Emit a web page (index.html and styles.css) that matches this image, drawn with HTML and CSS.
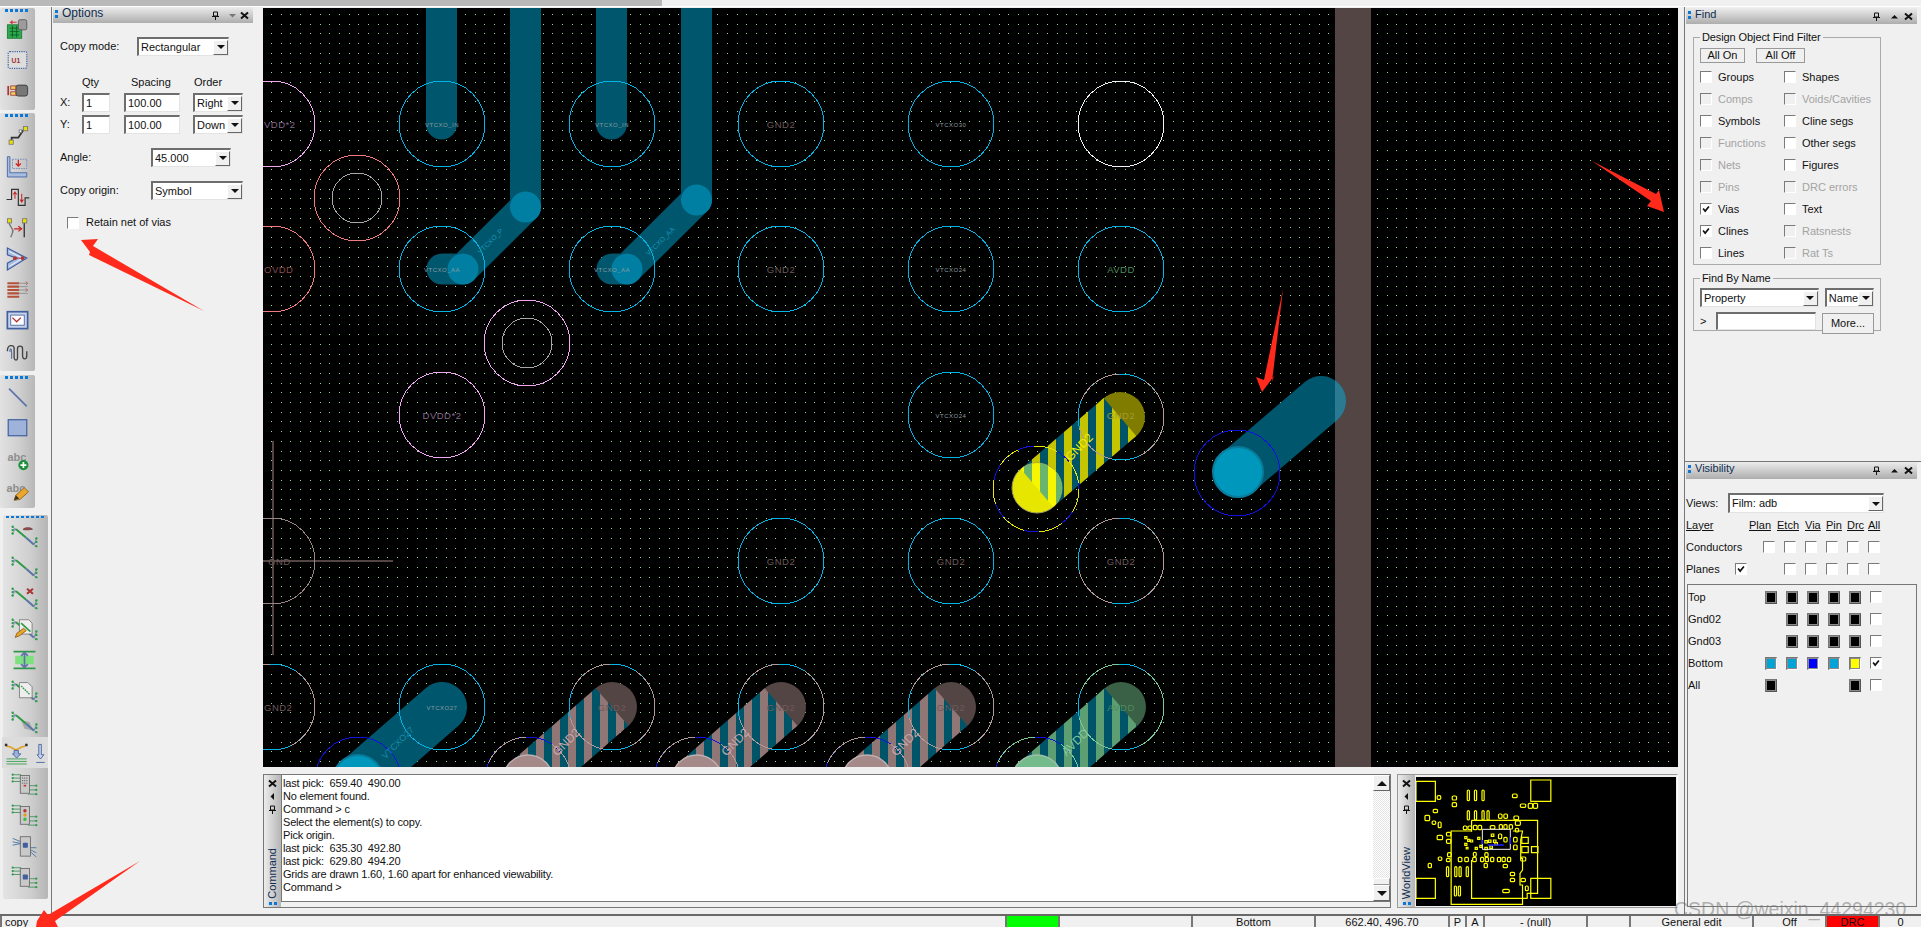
FILE: index.html
```html
<!DOCTYPE html>
<html lang="en">
<head>
<meta charset="utf-8">
<title>Allegro PCB Editor</title>
<link rel="stylesheet" href="styles.css">
</head>
<body>
<svg class="defs" aria-hidden="true">
  <symbol id="x" viewBox="0 0 9 9"><path d="M1 1.5 8 7.5M8 1.5 1 7.5" stroke="#111" stroke-width="2"/></symbol>
  <symbol id="pin" viewBox="0 0 9 9"><path d="M2.5 1h4v4h-4zM1 5.5h7M4.5 5.5V9" stroke="#111" fill="none"/></symbol>
  <symbol id="up" viewBox="0 0 9 9"><path d="M1 6.5 4.5 3 8 6.5z" fill="#111"/></symbol>
  <symbol id="down" viewBox="0 0 9 9"><path d="M1 3 8 3 4.5 6.5z" fill="#777"/></symbol>
  <symbol id="left" viewBox="0 0 9 9"><path d="M6 1v7L2.5 4.5z" fill="#111"/></symbol>
  <symbol id="check" viewBox="0 0 12 12"><path d="M2.5 5.5 5 8.5 9.5 3" fill="none" stroke="#111" stroke-width="2"/></symbol>
  <symbol id="net" viewBox="0 0 32 28">
    <path d="M6 6 18 16" stroke="#2f9a45" stroke-width="2.4" fill="none"/><path d="M18 16 27 24" stroke="#5b74a8" stroke-width="2.4" fill="none"/>
    <path d="M1 3 6 6M1 7 6 6M1 11 6 6M31 16 27 24M31 20 27 24M31 27 27 24" stroke="#5b74a8" stroke-width=".8"/>
    <g fill="#2aa044"><circle cx="2" cy="3" r="1.4"/><circle cx="2" cy="7" r="1.4"/><circle cx="2" cy="11" r="1.4"/><circle cx="30" cy="17" r="1.4"/><circle cx="30" cy="21" r="1.4"/><circle cx="30" cy="26" r="1.4"/></g>
  </symbol>
  <symbol id="chipnet" viewBox="0 0 32 28">
    <g fill="#2aa044"><circle cx="2" cy="3" r="1.3"/><circle cx="2" cy="7" r="1.3"/><circle cx="2" cy="11" r="1.3"/><circle cx="30" cy="16" r="1.3"/><circle cx="30" cy="21" r="1.3"/><circle cx="30" cy="26" r="1.3"/></g>
    <path d="M2 3h10M2 7h10M2 11h10M20 16h10M20 21h10M20 26h10" stroke="#3d8f5a"/>
    <rect x="11" y="4" width="11" height="21" fill="#c9c9c9" stroke="#666"/>
  </symbol>
</svg>

<div class="topstrip"><div class="topbar"></div></div>

<div class="main">
  <div class="toolstrip">
    <div class="tb tb1">
      <div class="grip"></div>
      <div class="slot"><svg class="ic" viewBox="0 0 32 28"><rect x="4" y="9" width="17" height="16" fill="#2fa84f" stroke="#1b7a35"/><path d="M7 13h11M7 17h11M7 21h11M10 10v14M15 10v14" stroke="#0d5c24"/><rect x="17" y="3" width="10" height="12" rx="2" fill="#9c9c9c" stroke="#555"/><path d="M15 6H8l2-2M8 6l2 2" stroke="#c33" fill="none" stroke-width="1.4"/></svg></div>
      <div class="slot"><svg class="ic" viewBox="0 0 32 28"><rect x="5" y="4" width="22" height="20" rx="2" fill="#ddd" stroke="#4668a8" stroke-dasharray="1.5 1.2" stroke-width="1.4"/><text x="9" y="18" class="u1">U1</text></svg></div>
      <div class="slot"><svg class="ic" viewBox="0 0 32 28"><rect x="14" y="7" width="14" height="13" rx="3" fill="#777" stroke="#333"/><rect x="8" y="8" width="6" height="4" fill="#e8d85a" stroke="#a33"/><rect x="8" y="15" width="6" height="4" fill="#e8d85a" stroke="#a33"/><path d="M5 8v11" stroke="#a33" stroke-width="2"/></svg></div>
    </div>
    <div class="tb tb2">
      <div class="grip"></div>
      <div class="slot"><svg class="ic" viewBox="0 0 32 28"><path d="M9 23v-6h8l6-9" fill="none" stroke="#333" stroke-width="2"/><rect x="6" y="20" width="5" height="5" fill="#e8e000" stroke="#777"/><rect x="23" y="4" width="5" height="5" fill="#e8e000" stroke="#777"/><rect x="18" y="8" width="3" height="3" fill="#fff" stroke="#777"/></svg></div>
      <div class="slot"><svg class="ic" viewBox="0 0 32 28"><path d="M7 3v19h20v5H4V3z" fill="#a9bde0" stroke="#3f5f9f"/><rect x="10" y="6" width="17" height="11" fill="none" stroke="#6f86b8" stroke-dasharray="2 1"/><path d="M17 7v7M14 11l3 3 3-3" fill="none" stroke="#c22" stroke-width="1.5"/></svg></div>
      <div class="slot"><svg class="ic" viewBox="0 0 32 28"><path d="M3 17h6V5h8v19h8v-9h5" fill="none" stroke="#333" stroke-width="1.4"/><path d="M13 16V8M11 11l2-3 2 3M21 10v10M19 17l2 3 2-3" fill="none" stroke="#c22" stroke-width="1.2"/></svg></div>
      <div class="slot"><svg class="ic" viewBox="0 0 32 28"><path d="M6 7c0 7 7 7 4 13l-2 5" fill="none" stroke="#777" stroke-width="1.6"/><path d="M24 6v19" stroke="#333" stroke-width="1.6"/><rect x="4" y="3" width="5" height="5" fill="#e8e000" stroke="#777"/><rect x="22" y="3" width="5" height="5" fill="#e8e000" stroke="#777"/><path d="M12 15h8M17 12l4 3-4 3" fill="none" stroke="#c22" stroke-width="1.4"/></svg></div>
      <div class="slot"><svg class="ic" viewBox="0 0 32 28"><path d="M4 1 27 13 4 27v-8l11-6L4 9z" fill="#a9bde0" stroke="#3f5f9f" stroke-width="1.4"/><path d="M6 5 22 13 6 23" fill="none" stroke="#fff"/><circle cx="13" cy="13" r="2.200" fill="#b53333"/><circle cx="22" cy="13" r="2.200" fill="#b53333"/><path d="M13 13h9" stroke="#b53333"/></svg></div>
      <div class="slot"><svg class="ic" viewBox="0 0 32 28"><g fill="none" stroke="#b5523a" stroke-width="2.4"><path d="M4 6h14M4 10h14M4 14h14M4 18h14M4 22h14"/></g><path d="M18 6h10M18 10h10M18 14h10M18 18h10" stroke="#888"/><path d="M26 4l2 2-2 2M26 12l2 2-2 2" fill="none" stroke="#b5523a"/></svg></div>
      <div class="slot"><svg class="ic" viewBox="0 0 32 28"><rect x="4" y="3" width="24" height="20" fill="#c7d2e8" stroke="#3f5f9f" stroke-width="2"/><rect x="8" y="7" width="16" height="12" fill="#fff" stroke="#3f5f9f"/><path d="M10 10l5 5 5-5" fill="none" stroke="#b53333" stroke-width="1.6"/></svg></div>
      <div class="slot"><svg class="ic" viewBox="0 0 32 28"><path d="M4 13c0-8 7-8 8-4v12c1 4 4 3 4 0V10c0-4 6-4 6 0v8c0 6 5 5 5 0v-5" fill="none" stroke="#444" stroke-width="1.6"/><path d="M7 14c0-6 2-4 2 0v8" fill="none" stroke="#5b74a8" stroke-width="1.4"/></svg></div>
    </div>
    <div class="tb tb3">
      <div class="grip"></div>
      <div class="slot"><svg class="ic" viewBox="0 0 32 28"><path d="M6 3 27 24" stroke="#5b74a8" stroke-width="2"/></svg></div>
      <div class="slot"><svg class="ic" viewBox="0 0 32 28"><rect x="5" y="3" width="22" height="19" fill="#9fb2da" stroke="#3f5f9f" stroke-width="1.4"/></svg></div>
      <div class="slot"><svg class="ic" viewBox="0 0 32 28"><text x="4" y="15" class="abc">abc</text><circle cx="23" cy="20" r="6" fill="#1f8f3b"/><path d="M19.5 20h7M23 16.500v7" stroke="#fff" stroke-width="2"/></svg></div>
      <div class="slot"><svg class="ic" viewBox="0 0 32 28"><text x="3" y="15" class="abc">abc</text><path d="M12 25l2-6 10-9 5 5-10 9z" fill="#e9a82c" stroke="#8a5a14"/><path d="M12 25l2-6 4 4z" fill="#333"/></svg></div>
    </div>
    <div class="tb tb4">
      <div class="grip"></div>
      <div class="slot"><svg class="ic" viewBox="0 0 32 28"><use href="#net"/><path d="M14 6c2-3 10-3 12 0 2 1-14 2-12 0z" fill="#8a4a4a"/></svg></div>
      <div class="slot"><svg class="ic" viewBox="0 0 32 28"><use href="#net"/></svg></div>
      <div class="slot"><svg class="ic" viewBox="0 0 32 28"><use href="#net"/><path d="M19 3l7 6M26 3l-7 6" stroke="#a33" stroke-width="2.4"/></svg></div>
      <div class="slot"><svg class="ic" viewBox="0 0 32 28"><use href="#net"/><path d="M10 3h11l4 4v13H10z" fill="#eee" stroke="#777"/><path d="M12 7l11 10" stroke="#2f9a45" stroke-width="2"/><path d="M5 24l2-5 8-6 3 3-8 6z" fill="#e9a82c" stroke="#8a5a14"/></svg></div>
      <div class="slot"><svg class="ic" viewBox="0 0 32 28"><path d="M3 4h26M3 24h26" stroke="#2f9a45" stroke-width="2"/><rect x="5" y="9" width="22" height="10" fill="#7fe07f"/><path d="M16 5v18M12 9l4-4 4 4M12 19l4 4 4-4" fill="none" stroke="#5b74a8" stroke-width="2"/></svg></div>
      <div class="slot"><svg class="ic" viewBox="0 0 32 28"><use href="#net"/><path d="M10 4h10l5 5v13H10z" fill="#eee" stroke="#777"/><path d="M12 8l10 10" stroke="#2f9a45" stroke-dasharray="2 1" stroke-width="1.600"/></svg></div>
      <div class="slot"><svg class="ic" viewBox="0 0 32 28"><path d="M12 12l10 2 4 10-10-2z" fill="#aaa"/><use href="#net"/></svg></div>
      <div class="slot slot-hi"><svg class="ic" viewBox="0 0 32 28"><path d="M3 6c8 0 6 4 11 4s4-4 11-4" fill="none" stroke="#e0a020" stroke-width="2"/><path d="M3 21h24M3 24h24M3 27h24" stroke="#2f9a45"/><path d="M12 11h5v4h3l-5 5-5-5h2z" fill="#9fb2da" stroke="#3f5f9f"/><rect x="1" y="3" width="3" height="3" fill="#333"/><rect x="25" y="3" width="3" height="3" fill="#333"/></svg><svg class="ic-sm" viewBox="0 0 12 28"><path d="M4 4h3v12h3l-4 5-4-5h2zM1 25h10" fill="#c7d2e8" stroke="#3f5f9f"/></svg></div>
      <div class="slot"><svg class="ic" viewBox="0 0 32 28"><use href="#chipnet"/><path d="M13 7h7M13 10h7M13 13h7" stroke="#555" stroke-dasharray="1.500 1"/><rect x="15" y="15" width="3" height="2" fill="#c33"/></svg></div>
      <div class="slot"><svg class="ic" viewBox="0 0 32 28"><use href="#chipnet"/><circle cx="16.500" cy="9" r="2" fill="#b53333"/><circle cx="16.500" cy="14" r="2" fill="#e0a020"/><circle cx="16.500" cy="19" r="2" fill="#3dbb3d"/></svg></div>
      <div class="slot"><svg class="ic" viewBox="0 0 32 28"><path d="M2 5l10 4M2 9l10 2M2 13l10-2M22 16l8 0M22 18l8 4M22 20l8 7" stroke="#3d6fa0"/><rect x="11" y="3" width="12" height="23" fill="#c9c9c9" stroke="#666"/><rect x="14" y="10" width="6" height="6" rx="1" fill="#3f5f9f"/></svg></div>
      <div class="slot"><svg class="ic" viewBox="0 0 32 28"><use href="#chipnet"/><rect x="14" y="11" width="6" height="6" rx="1" fill="#3f5f9f"/></svg></div>
    </div>
  </div>

  <section class="options">
    <header class="titlebar"><span class="dots"></span><span class="tt">Options</span><svg class="tg"><use href="#pin"/></svg><svg class="tg"><use href="#down"/></svg><svg class="tg"><use href="#x"/></svg></header>
    <div class="opt-body">
      <div class="row row-mode"><span class="lbl-77">Copy mode:</span><div class="sel w92"><span class="val">Rectangular</span><i class="drop"></i></div></div>
      <div class="qgrid">
        <span></span><span>Qty</span><span class="ind7">Spacing</span><span class="ind1">Order</span>
        <span class="axis">X:</span><div class="inp w28">1</div><div class="inp w56">100.00</div><div class="sel w50"><span class="val">Right</span><i class="drop"></i></div>
        <span class="axis">Y:</span><div class="inp w28">1</div><div class="inp w56">100.00</div><div class="sel w50"><span class="val">Down</span><i class="drop"></i></div>
      </div>
      <div class="row row-14"><span class="lbl-91">Angle:</span><div class="sel w80"><span class="val">45.000</span><i class="drop"></i></div></div>
      <div class="row row-14"><span class="lbl-91">Copy origin:</span><div class="sel w92"><span class="val">Symbol</span><i class="drop"></i></div></div>
      <label class="retain"><i class="cb"></i>Retain net of vias</label>
    </div>
  </section>

  <div class="center">
    <svg class="board" viewBox="263 8 1415 759" xmlns="http://www.w3.org/2000/svg">
      <defs>
        <pattern id="grid" width="97" height="97" patternUnits="userSpaceOnUse" x="271" y="14">
          <g class="gridrows">
            <path d="M0 .5H97"/><path d="M0 10.500H97"/><path d="M0 19.500H97"/><path d="M0 29.500H97"/><path d="M0 39.500H97"/><path d="M0 49.500H97"/><path d="M0 58.500H97"/><path d="M0 68.500H97"/><path d="M0 78.500H97"/><path d="M0 87.500H97"/>
          </g>
        </pattern>
        <pattern id="stripeY" width="16" height="16" patternUnits="userSpaceOnUse" x="1088"><rect width="16" height="16" fill="#c4c400"/><rect width="8" height="16" fill="#005468"/></pattern>
        <pattern id="stripeP" width="16" height="16" patternUnits="userSpaceOnUse" x="1088"><rect width="16" height="16" fill="#917676"/><rect width="8" height="16" fill="#005468"/></pattern>
        <pattern id="stripeG" width="16" height="16" patternUnits="userSpaceOnUse" x="1088"><rect width="16" height="16" fill="#5d9e73"/><rect width="8" height="16" fill="#005468"/></pattern>
        <pattern id="stripeV" width="16" height="16" patternUnits="userSpaceOnUse" x="1088"><rect width="16" height="16" fill="#f6f600"/><rect width="8" height="16" fill="#6ab56d"/></pattern>
        <clipPath id="bandclip"><rect x="1335" y="8" width="36" height="759"/></clipPath>
        <clipPath id="viaY"><circle cx="1037" cy="488" r="25"/></clipPath>
      </defs>
      <rect class="bg" x="263" y="8" width="1415" height="759"/>
      <rect x="263" y="8" width="1415" height="759" fill="url(#grid)"/>
      <rect class="band" x="1335" y="8" width="36" height="759"/>
      <path class="xhair" d="M272.500 441V655M263 561H393"/>

      <path class="tr" d="M441.500 0V124"/>
      <path class="tr" d="M525.500 0V207L463 269H442"/>
      <path class="tr" d="M611.500 0V124"/>
      <path class="tr" d="M696.500 0V200L627 269H612"/>
      <circle class="hot" cx="525.500" cy="207" r="15.500"/><circle class="hot" cx="463" cy="269" r="15.500"/>
      <circle class="hot" cx="696.500" cy="200" r="15.500"/><circle class="hot" cx="627" cy="269" r="15.500"/>

      <path class="tr tr-w" d="M1238 472 1321 401"/>
      <path class="tr tr-wb" clip-path="url(#bandclip)" d="M1238 472 1321 401"/>
      <circle class="via-c" cx="1238" cy="472" r="25"/>

      <circle class="cap-y" cx="1120" cy="417" r="25"/>
      <path class="s-y" d="M1037 488 1120 417"/>
      <circle class="via-y" cx="1037" cy="488" r="25"/>
      <path class="s-v" clip-path="url(#viaY)" d="M1037 488 1120 417"/>

      <path class="tr tr-w" d="M358 780 442 707"/>
      <circle class="via-c" cx="358" cy="780" r="25"/>
      <circle class="cap-p" cx="612" cy="707" r="25"/><path class="s-p" d="M528 780 612 707"/><circle class="via-p" cx="528" cy="780" r="25"/>
      <circle class="cap-p" cx="781" cy="707" r="25"/><path class="s-p" d="M697 780 781 707"/><circle class="via-p" cx="697" cy="780" r="25"/>
      <circle class="cap-p" cx="951" cy="707" r="25"/><path class="s-p" d="M867 780 951 707"/><circle class="via-p" cx="867" cy="780" r="25"/>
      <circle class="cap-g" cx="1121" cy="707" r="25"/><path class="s-g" d="M1037 780 1121 707"/><circle class="via-g" cx="1037" cy="780" r="25"/>

      <circle class="pad pink" cx="272" cy="124" r="43"/>
      <circle class="pad cy" cx="442" cy="124" r="43"/><circle class="pad cy" cx="612" cy="124" r="43"/>
      <circle class="pad cy" cx="781" cy="124" r="43"/><circle class="pad cy" cx="951" cy="124" r="43"/>
      <circle class="pad wh" cx="1121" cy="124" r="43"/>
      <circle class="pad sal" cx="272" cy="269" r="43"/>
      <circle class="pad cy" cx="442" cy="269" r="43"/><circle class="pad cy" cx="612" cy="269" r="43"/>
      <circle class="pad cy" cx="781" cy="269" r="43"/><circle class="pad cy" cx="951" cy="269" r="43"/>
      <circle class="pad cy" cx="1121" cy="269" r="43"/>
      <circle class="pad pink" cx="442" cy="415" r="43"/><circle class="pad cy" cx="951" cy="415" r="43"/>
      <circle class="pad cy" cx="1121" cy="417" r="43"/><circle class="pad br-d" cx="1121" cy="417" r="43"/>
      <circle class="pad br" cx="272" cy="561" r="43"/>
      <circle class="pad cy" cx="781" cy="561" r="43"/><circle class="pad cy" cx="951" cy="561" r="43"/>
      <circle class="pad cy" cx="1121" cy="561" r="43"/><circle class="pad br-d" cx="1121" cy="561" r="43"/>
      <circle class="pad cy" cx="272" cy="707" r="43"/><circle class="pad br-d" cx="272" cy="707" r="43"/>
      <circle class="pad cy" cx="442" cy="707" r="43"/>
      <circle class="pad cy" cx="612" cy="707" r="43"/><circle class="pad br-d" cx="612" cy="707" r="43"/>
      <circle class="pad cy" cx="781" cy="707" r="43"/><circle class="pad br-d" cx="781" cy="707" r="43"/>
      <circle class="pad cy" cx="951" cy="707" r="43"/><circle class="pad br-d" cx="951" cy="707" r="43"/>
      <circle class="pad cy" cx="1121" cy="707" r="43"/><circle class="pad gr-d" cx="1121" cy="707" r="43"/>

      <circle class="pad sal" cx="357" cy="198" r="43"/><circle class="pad gy" cx="357" cy="198" r="25"/>
      <circle class="pad pink" cx="527" cy="343" r="43"/><circle class="pad gy" cx="527" cy="343" r="25"/>
      <circle class="pad bl" cx="1237" cy="473" r="43"/>
      <circle class="pad bl" cx="1036" cy="489" r="43"/><circle class="pad ye-d" cx="1036" cy="489" r="43"/>
      <circle class="pad bl" cx="358" cy="780" r="43"/>
      <circle class="pad bl" cx="528" cy="780" r="43"/><circle class="pad br-d" cx="528" cy="780" r="43"/>
      <circle class="pad bl" cx="697" cy="780" r="43"/><circle class="pad br-d" cx="697" cy="780" r="43"/>
      <circle class="pad bl" cx="867" cy="780" r="43"/><circle class="pad br-d" cx="867" cy="780" r="43"/>
      <circle class="pad bl" cx="1037" cy="780" r="43"/><circle class="pad gr-d" cx="1037" cy="780" r="43"/>

      <text class="lb l-pk" x="264" y="128">VDD*2</text>
      <text class="lb l-sm" x="442" y="127">VTCXO_IN</text><text class="lb l-sm" x="612" y="127">VTCXO_IN</text>
      <text class="lb l-b" x="781" y="128">GND2</text><text class="lb l-sm" x="951" y="127">VTCXO30</text>
      <text class="lb l-sa" x="264" y="273">OVDD</text>
      <text class="lb l-sm" x="442" y="272">VTCXO_AA</text><text class="lb l-sm" x="612" y="272">VTCXO_AA</text>
      <text class="lb l-b" x="781" y="273">GND2</text><text class="lb l-sm" x="951" y="272">VTCXO24</text>
      <text class="lb l-g" x="1121" y="273">AVDD</text>
      <text class="lb l-pk l-mid" x="442" y="419">DVDD*2</text><text class="lb l-sm" x="951" y="418">VTCXO24</text>
      <text class="lb l-y" x="1121" y="419">GND2</text>
      <text class="lb l-b l-st" x="268" y="565">GND</text>
      <text class="lb l-b" x="781" y="565">GND2</text><text class="lb l-b" x="951" y="565">GND2</text><text class="lb l-b" x="1121" y="565">GND2</text>
      <text class="lb l-b l-st" x="264" y="711">GND2</text><text class="lb l-sm" x="442" y="710">VTCXO27</text>
      <text class="lb l-b" x="612" y="711">GND2</text><text class="lb l-b" x="781" y="711">GND2</text><text class="lb l-b" x="951" y="711">GND2</text>
      <text class="lb l-g" x="1121" y="711">AVDD</text>
      <text class="nm n-c-s" transform="translate(492 243) rotate(-45)">VTCXO_P</text>
      <text class="nm n-c-s" transform="translate(662 243) rotate(-45)">VTCXO_AA</text>
      <text class="nm n-y" transform="translate(1082 450) rotate(-45)">GND2</text>
      <text class="nm n-c" transform="translate(400 745) rotate(-45)">VTCXO27</text>
      <text class="nm n-p" transform="translate(569 745) rotate(-45)">GND2</text>
      <text class="nm n-p" transform="translate(738 745) rotate(-45)">GND2</text>
      <text class="nm n-p" transform="translate(908 745) rotate(-45)">GND2</text>
      <text class="nm n-g" transform="translate(1078 745) rotate(-45)">AVDD</text>
    </svg>

    <div class="lower">
      <section class="command">
        <aside class="vtitle"><svg class="tg"><use href="#x"/></svg><svg class="tg"><use href="#left"/></svg><svg class="tg"><use href="#pin"/></svg><span class="vname">Command</span><span class="vdots"></span></aside>
        <div class="console">
          <div class="log">
            <div>last pick:&nbsp; 659.40&nbsp; 490.00</div>
            <div>No element found.</div>
            <div>Command &gt; c</div>
            <div>Select the element(s) to copy.</div>
            <div>Pick origin.</div>
            <div>last pick:&nbsp; 635.30&nbsp; 492.80</div>
            <div>last pick:&nbsp; 629.80&nbsp; 494.20</div>
            <div>Grids are drawn 1.60, 1.60 apart for enhanced viewability.</div>
            <div>Command &gt;</div>
          </div>
          <div class="scroll">
            <div class="sbtn"><i class="tri-up"></i></div>
            <div class="strack"></div>
            <div class="sthumb"></div>
            <div class="sbtn"><i class="tri-dn"></i></div>
          </div>
        </div>
      </section>
      <section class="world">
        <aside class="vtitle vt-world"><svg class="tg"><use href="#x"/></svg><svg class="tg"><use href="#left"/></svg><svg class="tg"><use href="#pin"/></svg><span class="vname vn-w">WorldView</span><span class="vdots"></span></aside>
        <svg class="map" viewBox="160 51 725 387" preserveAspectRatio="none">
          <g class="ye">
            <rect x="160" y="64" width="54" height="60"/><rect x="480" y="60" width="56" height="64"/><rect x="160" y="355" width="54" height="60"/><rect x="480" y="355" width="56" height="60"/>
            <path d="M315 181H499V400H470V415H315V300M315 181V215"/>
            <path d="M315 213H258V433H457V375H450V340L457 330V295H452V240L457 213H430"/>
            <g class="ys">
              <rect x="219" y="107" width="10" height="11" rx="3"/><rect x="261" y="108" width="12" height="12" rx="3"/><rect x="261" y="128" width="12" height="12" rx="3"/><rect x="303" y="90" width="6" height="32" rx="3"/><rect x="323" y="90" width="6" height="32" rx="3"/><rect x="344" y="90" width="6" height="32" rx="3"/><rect x="429" y="102" width="13" height="11" rx="3"/><rect x="451" y="132" width="15" height="10" rx="3"/><rect x="473" y="130" width="12" height="15" rx="3"/><rect x="487" y="130" width="12" height="15" rx="3"/><rect x="208" y="148" width="12" height="10" rx="3"/><rect x="185" y="166" width="13" height="16" rx="3"/><rect x="205" y="183" width="10" height="10" rx="3"/><rect x="222" y="186" width="8" height="17" rx="3"/><rect x="303" y="152" width="6" height="28" rx="3"/><rect x="323" y="152" width="6" height="28" rx="3"/><rect x="344" y="152" width="6" height="28" rx="3"/><rect x="358" y="152" width="6" height="28" rx="3"/><rect x="390" y="162" width="10" height="13" rx="3"/><rect x="405" y="162" width="10" height="13" rx="3"/><rect x="433" y="168" width="13" height="11" rx="3"/><rect x="437" y="183" width="14" height="13" rx="3"/><rect x="292" y="198" width="10" height="11" rx="3"/><rect x="305" y="198" width="10" height="11" rx="3"/><rect x="320" y="196" width="10" height="13" rx="3"/><rect x="333" y="196" width="10" height="13" rx="3"/><rect x="367" y="197" width="13" height="10" rx="3"/><rect x="392" y="194" width="9" height="13" rx="3"/><rect x="405" y="194" width="9" height="13" rx="3"/><rect x="420" y="194" width="9" height="13" rx="3"/><rect x="437" y="205" width="9" height="11" rx="3"/><rect x="245" y="217" width="12" height="11" rx="3"/><rect x="219" y="226" width="15" height="13" rx="3"/><rect x="245" y="238" width="12" height="12" rx="3"/><rect x="455" y="232" width="18" height="18"/><rect x="455" y="260" width="18" height="18"/><rect x="482" y="260" width="18" height="18"/><rect x="432" y="232" width="10" height="14" rx="3"/><rect x="432" y="255" width="10" height="14" rx="3"/><rect x="405" y="232" width="9" height="14" rx="3"/><rect x="390" y="222" width="9" height="14" rx="3"/><rect x="248" y="278" width="10" height="12" rx="3"/><rect x="222" y="291" width="10" height="10" rx="3"/><rect x="245" y="295" width="10" height="10" rx="3"/><rect x="278" y="292" width="10" height="13" rx="3"/><rect x="296" y="292" width="10" height="13" rx="3"/><rect x="320" y="277" width="8" height="12" rx="3"/><rect x="318" y="292" width="10" height="13" rx="3"/><rect x="340" y="292" width="9" height="13" rx="3"/><rect x="353" y="292" width="9" height="13" rx="3"/><rect x="368" y="292" width="9" height="13" rx="3"/><rect x="387" y="292" width="9" height="13" rx="3"/><rect x="400" y="292" width="9" height="13" rx="3"/><rect x="415" y="292" width="9" height="13" rx="3"/><rect x="452" y="291" width="14" height="12" rx="3"/><rect x="194" y="310" width="9" height="13" rx="3"/><rect x="350" y="310" width="9" height="13" rx="3"/><rect x="403" y="313" width="12" height="10" rx="3"/><rect x="245" y="320" width="6" height="30" rx="3"/><rect x="268" y="320" width="6" height="30" rx="3"/><rect x="280" y="320" width="6" height="30" rx="3"/><rect x="300" y="320" width="6" height="30" rx="3"/><rect x="423" y="337" width="12" height="10" rx="3"/><rect x="423" y="355" width="12" height="10" rx="3"/><rect x="453" y="355" width="12" height="10" rx="3"/><rect x="465" y="378" width="8" height="14" rx="3"/><rect x="402" y="388" width="18" height="10" rx="3"/><rect x="267" y="378" width="6" height="30" rx="3"/><rect x="278" y="378" width="6" height="30" rx="3"/>
              <rect x="296" y="230" width="6" height="6"/><rect x="304" y="238" width="6" height="6"/><rect x="296" y="250" width="6" height="6"/><rect x="312" y="240" width="6" height="6"/><rect x="332" y="232" width="6" height="6"/><rect x="352" y="242" width="7" height="7"/><rect x="362" y="240" width="7" height="7"/><rect x="376" y="240" width="7" height="7"/><rect x="352" y="262" width="7" height="7"/><rect x="366" y="258" width="7" height="7"/><rect x="380" y="248" width="7" height="7"/><rect x="370" y="222" width="7" height="7"/><rect x="325" y="262" width="6" height="6"/><rect x="338" y="256" width="6" height="6"/><rect x="300" y="262" width="5" height="5"/>
              <rect x="352" y="278" width="9" height="12" rx="3"/>
            </g>
          </g>
          <path class="viewbox" d="M345 248V208H423V268H345V248"/>
          <path class="viewbl" d="M345 240V252M360 255H405M423 232V252"/>
        </svg>
      </section>
    </div>
  </div>

  <div class="side">
    <section class="find">
      <header class="titlebar tb-side"><span class="dots"></span><span class="tt tt-s">Find</span><svg class="tg"><use href="#pin"/></svg><svg class="tg"><use href="#up"/></svg><svg class="tg"><use href="#x"/></svg></header>
      <div class="find-body">
        <fieldset class="fs fs-filter">
          <legend>Design Object Find Filter</legend>
          <div class="btnrow"><button class="btn b45">All On</button><button class="btn b49">All Off</button></div>
          <div class="filters">
            <label class="f"><i class="cb"></i>Groups</label><label class="f"><i class="cb"></i>Shapes</label>
            <label class="f off"><i class="cb"></i>Comps</label><label class="f off"><i class="cb"></i>Voids/Cavities</label>
            <label class="f"><i class="cb"></i>Symbols</label><label class="f"><i class="cb"></i>Cline segs</label>
            <label class="f off"><i class="cb"></i>Functions</label><label class="f"><i class="cb"></i>Other segs</label>
            <label class="f off"><i class="cb"></i>Nets</label><label class="f"><i class="cb"></i>Figures</label>
            <label class="f off"><i class="cb"></i>Pins</label><label class="f off"><i class="cb"></i>DRC errors</label>
            <label class="f"><i class="cb"><svg class="chk"><use href="#check"/></svg></i>Vias</label><label class="f"><i class="cb"></i>Text</label>
            <label class="f"><i class="cb"><svg class="chk"><use href="#check"/></svg></i>Clines</label><label class="f off"><i class="cb"></i>Ratsnests</label>
            <label class="f"><i class="cb"></i>Lines</label><label class="f off"><i class="cb"></i>Rat Ts</label>
          </div>
        </fieldset>
        <fieldset class="fs fs-name">
          <legend>Find By Name</legend>
          <div class="fn-row"><div class="sel w121"><span class="val">Property</span><i class="drop"></i></div><div class="sel w50 ml6"><span class="val">Name</span><i class="drop"></i></div></div>
          <div class="fn-row fn-2"><span class="gt">&gt;</span><div class="inp w104"></div><button class="btn bmore">More...</button></div>
        </fieldset>
      </div>
    </section>
    <section class="visibility">
      <header class="titlebar tb-side tb-vis"><span class="dots"></span><span class="tt tt-v">Visibility</span><svg class="tg"><use href="#pin"/></svg><svg class="tg"><use href="#up"/></svg><svg class="tg"><use href="#x"/></svg></header>
      <div class="views"><span class="lbl-42">Views:</span><div class="sel w156"><span class="val">Film: adb</span><i class="drop"></i></div></div>
      <div class="vis-head"><u>Layer</u><u>Plan</u><u>Etch</u><u>Via</u><u>Pin</u><u>Drc</u><u>All</u></div>
      <div class="vis-grid">
        <span class="span2">Conductors</span><i class="cb"></i><i class="cb"></i><i class="cb"></i><i class="cb"></i><i class="cb"></i><i class="cb"></i>
        <span>Planes</span><i class="cb"><svg class="chk"><use href="#check"/></svg></i><span></span><i class="cb"></i><i class="cb"></i><i class="cb"></i><i class="cb"></i><i class="cb"></i>
      </div>
      <div class="layers">
        <span>Top</span><b class="sw k"></b><b class="sw k"></b><b class="sw k"></b><b class="sw k"></b><b class="sw k"></b><i class="cb"></i>
        <span>Gnd02</span><b class="nosw"></b><b class="sw k"></b><b class="sw k"></b><b class="sw k"></b><b class="sw k"></b><i class="cb"></i>
        <span>Gnd03</span><b class="nosw"></b><b class="sw k"></b><b class="sw k"></b><b class="sw k"></b><b class="sw k"></b><i class="cb"></i>
        <span>Bottom</span><b class="sw c"></b><b class="sw c"></b><b class="sw bb"></b><b class="sw c"></b><b class="sw y"></b><i class="cb"><svg class="chk"><use href="#check"/></svg></i>
        <span>All</span><b class="sw k"></b><b class="nosw"></b><b class="nosw"></b><b class="nosw"></b><b class="sw k"></b><i class="cb"></i>
      </div>
    </section>
  </div>
</div>

<footer class="status">
  <div class="cell c-copy">copy</div>
  <div class="cell c-green"></div>
  <div class="cell c-blank"></div>
  <div class="cell c-bot">Bottom</div>
  <div class="cell c-xy">662.40, 496.70</div>
  <div class="cell c-p">P</div>
  <div class="cell c-a">A</div>
  <div class="cell c-null">- (null)</div>
  <div class="cell c-e"></div>
  <div class="cell c-gen">General edit</div>
  <div class="cell c-off">Off</div>
  <div class="cell c-drc">DRC</div>
  <div class="cell c-0">0</div>
</footer>

<svg class="arrows" viewBox="0 0 1921 927" aria-hidden="true">
  <path d="M81 240 98 239 93 246 204 311 89 255 90 252z"/>
  <path d="M1664 212 1647 206 1651 201 1592 161 1656 194 1659 190z"/>
  <path d="M1262 392 1256 377 1264 380 1283 289 1272 382 1274 376z"/>
  <path d="M37 921 44 910 48 915 140 861 55 921 58 927 36 927z"/>
</svg>
<div class="mark">CSDN @weixin_44294230</div>
</body>
</html>
```
FILE: styles.css
```css
* { box-sizing: border-box; }
html, body { margin: 0; padding: 0; }
body {
  width: 1921px; height: 927px; overflow: hidden; position: relative;
  display: flex; flex-direction: column;
  background: #f0f0f0; color: #111;
  font: 11px/13px "Liberation Sans", Arial, sans-serif;
}
.defs { position: absolute; width: 0; height: 0; overflow: hidden; }

.topstrip { height: 7px; flex: none; border-bottom: 1px solid #fff; }
.topbar { width: 662px; height: 6px; background: #b9b9b9; }

.main { flex: none; height: 907px; display: flex; align-items: flex-start; }

/* left toolbars */
.toolstrip { width: 52px; height: 907px; flex: none; border-right: 1px solid #777; display: flex; flex-direction: column; align-items: flex-start; }
.tb { width: 35px; background: linear-gradient(90deg, #e2e2e2, #cfcfcf 55%, #b7b7b7); border-radius: 2px; display: flex; flex-direction: column; }
.tb1 { margin-top: 1px; height: 102px; }
.tb2 { margin-top: 3px; height: 258px; }
.tb3 { margin-top: 4px; height: 133px; }
.tb4 { margin: 7px 0 0 3px; width: 45px; height: 384px; background: linear-gradient(90deg, #e4e4e4, #cfcfcf 60%, #b5b5b5); }
.grip { height: 4px; flex: none; margin: 1px 5px 0; background: repeating-linear-gradient(90deg, #0a78d8 0 3px, transparent 3px 5px); background-size: 100% 3px; background-repeat: no-repeat; }
.tb2 .grip { height: 5px; }
.tb3 .grip { height: 6px; margin-top: 1px; }
.tb4 .grip { margin: 1px 3px 0; height: 2px; }
.slot { height: 31px; flex: none; display: flex; align-items: center; justify-content: center; }
.ic { width: 27px; height: 24px; flex: none; }
.ic-sm { width: 11px; height: 24px; flex: none; }
.tb4 .slot { padding-right: 3px; }
.tb4 .grip + .slot { margin-top: 2px; }
.slot-hi { background: #dcdcdc; margin-left: -1px; gap: 4px; padding: 0 !important; }
.u1 { font: bold 8px "Liberation Sans", sans-serif; fill: #a03030; }
.abc { font: bold 13px "Liberation Sans", sans-serif; fill: #8e8e8e; }

/* title bars */
.titlebar { height: 16px; display: flex; align-items: center; background: linear-gradient(180deg, #ececec, #adadad); color: #0f2d50; }
.dots { width: 3px; height: 8px; margin: 0 4px 3px 2px; flex: none; background: linear-gradient(180deg, #0a78d8 0 3px, transparent 3px 5px, #0a78d8 5px); }
.tt { flex: 1; font-size: 12px; padding-bottom: 4px; }
.tg { width: 9px; height: 9px; flex: none; margin-left: 8px; }
.titlebar .tg:last-child { margin: 0 4px 0 3px; }

/* options */
.options { width: 202px; height: 907px; flex: none; }
.options .titlebar { width: 200px; margin-left: 1px; }
.opt-body { padding: 14px 0 0 8px; }
.row { display: flex; align-items: center; }
.row-14 { margin-top: 14px; }
.lbl-77 { width: 77px; }
.lbl-91 { width: 91px; }
.lbl-42 { width: 42px; }
.qgrid { margin-top: 19px; display: grid; grid-template-columns: 22px 42px 69px 50px; grid-template-rows: 15px 19px 19px; row-gap: 3px; align-items: center; }
.ind7 { padding-left: 7px; }
.ind1 { padding-left: 1px; }
.retain { margin: 16px 0 0 7px; display: flex; align-items: center; gap: 7px; }

/* widgets */
.sel, .inp { height: 19px; background: #fff; border: 1px solid #fff; border-top: 2px solid #6e6e6e; border-left: 2px solid #6e6e6e; border-right-color: #e3e3e3; border-bottom-color: #e3e3e3; display: flex; align-items: center; white-space: nowrap; overflow: hidden; padding-left: 2px; }
.val { flex: 1; overflow: hidden; }
.drop { width: 15px; height: 15px; flex: none; background: #f0f0f0; border: 1px solid; border-color: #fff #666 #666 #fff; position: relative; display: flex; align-items: center; justify-content: center; }
.drop::after { content: ""; border: 4px solid transparent; border-top: 4px solid #111; border-bottom: 0; }
.w28 { width: 28px; } .w50 { width: 50px; } .w56 { width: 56px; } .w80 { width: 80px; } .w92 { width: 92px; }
.w104 { width: 104px; height: 18px; } .w121 { width: 121px; } .w156 { width: 156px; height: 20px; }
.ml6 { margin-left: 6px; }
.cb { display: inline-flex; width: 12px; height: 12px; flex: none; background: #fff; border: 1px solid; border-color: #7a7a7a #fff #fff #7a7a7a; }
.chk { width: 10px; height: 10px; }
.off { color: #a3a3a3; }
.off .cb { background: #f0f0f0; }

/* centre */
.center { width: 1421px; margin-left: 9px; flex: none; padding-top: 1px; }
.board { display: block; width: 1415px; height: 759px; }
.gridrows path { fill: none; stroke: #8fe09a; stroke-width: 1; stroke-dasharray: 1 9 1 8 1 9 1 9 1 9 1 8 1 9 1 9 1 8 1 9; shape-rendering: crispEdges; }
.bg { fill: #000; }
.band { fill: #544545; }
.xhair { stroke: #544545; stroke-width: 2; fill: none; shape-rendering: crispEdges; }
.tr { fill: none; stroke: #00566c; stroke-width: 31; stroke-linecap: round; stroke-linejoin: round; }
.tr-w { stroke-width: 50; }
.tr-wb { stroke: #2c7a92; stroke-width: 50; }
.hot { fill: #007fa3; }
.via-c { fill: #0097bd; stroke: #0a7a99; stroke-width: 2; }
.cap-y { fill: #807c00; }
.s-y { stroke: url(#stripeY); stroke-width: 50; fill: none; }
.via-y { fill: #e6e600; stroke: #9a9a60; stroke-width: 1; }
.s-v { stroke: url(#stripeV); stroke-width: 50; fill: none; }
.cap-p { fill: #544545; }
.s-p { stroke: url(#stripeP); stroke-width: 50; fill: none; }
.via-p { fill: #a58888; stroke: #c0b0b0; stroke-width: 1.5; }
.cap-g { fill: #3a6045; }
.s-g { stroke: url(#stripeG); stroke-width: 50; fill: none; }
.via-g { fill: #74bb8c; stroke: #9fc0a8; stroke-width: 1.5; }
.pad { fill: none; stroke-width: 1; shape-rendering: crispEdges; }
.cy { stroke: #00b4e6; }
.pink { stroke: #f0a8f0; }
.sal { stroke: #f07a80; }
.wh { stroke: #f4f4f4; }
.gy { stroke: #a8a8a8; }
.bl { stroke: #1010e0; }
.br { stroke: #9a8585; }
.br-d { stroke: #b09a9a; stroke-dasharray: 48 28; }
.gr-d { stroke: #80c898; stroke-dasharray: 48 28; }
.ye-d { stroke: #e8e800; stroke-dasharray: 24 16; }
.lb { font: 9.500px "Liberation Sans", sans-serif; text-anchor: middle; letter-spacing: .5px; }
.l-b { fill: #6c5a5a; } .l-pk { fill: #84688a; text-anchor: start; } .l-sa { fill: #8a4a4a; text-anchor: start; }
.l-g { fill: #4f8a5c; } .l-y { fill: #a29a30; } .l-sm { font-size: 6px; fill: #8d9a9f; }
.l-st { text-anchor: start; } .l-mid { text-anchor: middle; }
.nm { font: 12px "Liberation Sans", sans-serif; text-anchor: middle; }
.n-y { fill: #f0f000; } .n-p { fill: #c8a8a8; } .n-g { fill: #86c89c; } .n-c { fill: #1a8aa8; font-size: 9px; } .n-c-s { fill: #1a94b5; font-size: 7px; }

.lower { margin-top: 7px; display: flex; height: 134px; }
.command { width: 1128px; flex: none; height: 134px; display: flex; border: 1px solid #777; border-left: 1px solid #777; }
.vtitle { width: 17px; flex: none; display: flex; flex-direction: column; align-items: center; padding-top: 4px; background: linear-gradient(90deg, #ececec, #b5b5b5); }
.vtitle .tg { margin: 0 0 4px; width: 9px; height: 9px; }
.vname { margin-top: auto; writing-mode: vertical-rl; transform: rotate(180deg); color: #0f2d50; }
.vdots { width: 8px; height: 3px; margin: 3px 0 2px; flex: none; background: linear-gradient(90deg, #0a78d8 0 3px, transparent 3px 5px, #0a78d8 5px); }
.console { flex: 1; display: flex; height: 127px; border-bottom: 1px solid #777; border-left: 1px solid #777; }
.log { flex: 1; background: #fff; padding: 2px 0 0 1px; letter-spacing: -.19px; }
.scroll { width: 17px; flex: none; display: flex; flex-direction: column; background: #f0f0f0; }
.sbtn { height: 16px; flex: none; background: #f0f0f0; border: 1px solid; border-color: #fff #666 #666 #fff; display: flex; align-items: center; justify-content: center; }
.strack { flex: 1; background: repeating-conic-gradient(#fff 0 25%, #e4e4e4 0 50%) 0 0 / 2px 2px; }
.sthumb { height: 7px; flex: none; background: #f0f0f0; border: 1px solid; border-color: #fff #999 #999 #fff; }
.tri-up { border: 5px solid transparent; border-bottom: 5px solid #111; border-top: 0; }
.tri-dn { border: 5px solid transparent; border-top: 5px solid #111; border-bottom: 0; }
.world { margin-left: 6px; width: 281px; flex: none; height: 134px; display: flex; align-items: flex-start; border: 1px solid #999; border-right-color: #fff; border-bottom-color: #999; }
.vt-world { height: 132px; }
.map { display: block; width: 260px; height: 129px; margin: 2px 0 0 1px; background: #000; }
.ye { fill: none; stroke: #ffff00; stroke-width: 1.2; }
.ye * { vector-effect: non-scaling-stroke; }
.viewbox { fill: none; stroke: #f0f0f0; vector-effect: non-scaling-stroke; }
.viewbl { fill: none; stroke: #2020ff; stroke-width: 1.500; vector-effect: non-scaling-stroke; }

/* side */
.side { width: 237px; flex: none; height: 907px; border-left: 1px solid #777; }
.tb-side { margin-left: 1px; width: 231px; margin-top: 1px; }
.tb-side .tg { margin-left: 9px; }
.tb-side .tg:last-child { margin: 0 4px 0 5px; }
.find { height: 453px; }
.tt-s, .tt-v { font-size: 11px; }
.find-body { padding: 7px 0 0 8px; }
.fs { margin: 0; min-width: 0; width: 188px; padding: 0 6px; border: 1px solid #aaa; }
.fs legend { padding: 0 2px; margin-left: 0; line-height: 13px; letter-spacing: -.1px; }
.fs-filter { height: 234px; }
.btnrow { display: flex; gap: 11px; margin-top: 4px; }
.btn { font: 11px/13px "Liberation Sans", sans-serif; color: #111; background: #f0f0f0; border: 1px solid; border-color: #fff #555 #555 #fff; outline: 1px solid #999; outline-offset: -1px; padding: 0; height: 15px; }
.b45 { width: 45px; } .b49 { width: 49px; }
.filters { margin-top: 3px; display: grid; grid-template-columns: 84px 1fr; grid-auto-rows: 22px; align-items: center; }
.f { display: flex; align-items: center; gap: 6px; white-space: nowrap; }
.fs-name { margin-top: 7px; height: 59px; }
.fn-row { display: flex; margin-top: 3px; }
.fn-2 { margin-top: 5px; align-items: flex-start; height: 18px; }
.gt { width: 16px; flex: none; line-height: 18px; }
.bmore { width: 52px; height: 21px; margin: 1px 0 0 6px; flex: none; }

.visibility { border-top: 1px solid #777; height: 454px; }
.tb-vis { margin-top: 0; height: 17px; }
.views { margin: 14px 0 0 1px; display: flex; align-items: center; }
.vis-head { margin: 1px 0 0 1px; height: 22px; display: grid; grid-template-columns: 63px 28px 28px 21px 21px 21px 21px; align-items: center; }
.vis-grid { margin-left: 1px; display: grid; grid-template-columns: 49px 28px repeat(6, 21px); grid-auto-rows: 22px; align-items: center; }
.span2 { grid-column: 1 / 3; }
.layers { margin: 4px 0 0 2px; width: 230px; height: 323px; border: 1px solid #777; padding: 1px 0 0 0; display: grid; grid-template-columns: 77px repeat(6, 21px); grid-auto-rows: 22px; align-items: center; align-content: start; }
.sw { display: block; width: 12px; height: 13px; border: 2px solid #8a8a8a; border-top-color: #777; border-left-color: #777; border-right: 1px solid #555; border-bottom: 1px solid #555; outline: 1px solid #8a8a8a; outline-offset: -2px; }
.k { background: #000; } .c { background: #00a4d6; } .bb { background: #0000ff; } .y { background: #ffff00; }
.c, .bb, .y { border-right-color: #fff; border-bottom-color: #fff; }
.nosw { display: block; }

/* status bar */
.status { flex: 1; display: flex; border-top: 2px solid #6a6a6a; margin-top: 0; overflow: hidden; }
.cell { height: 14px; border-left: 2px solid #777; text-align: center; white-space: nowrap; overflow: hidden; line-height: 13px; }
.c-copy { width: 1005px; text-align: left; padding-left: 3px; }
.c-green { width: 53px; background: #00ff00; }
.c-blank { width: 133px; }
.c-bot { width: 123px; }
.c-xy { width: 134px; }
.c-p { width: 17px; }
.c-a { width: 18px; }
.c-null { width: 103px; }
.c-e { width: 43px; }
.c-gen { width: 123px; }
.c-off { width: 73px; }
.c-drc { width: 53px; background: #ff0000; }
.c-0 { flex: 1; }

/* annotations over the page */
.arrows { position: absolute; left: 0; top: 0; width: 1921px; height: 927px; pointer-events: none; fill: #ff2a1c; }
.mark { position: absolute; left: 1674px; top: 897px; font: 19.500px/24px "Liberation Sans", sans-serif; color: rgba(110, 110, 110, .5); white-space: nowrap; }
```
